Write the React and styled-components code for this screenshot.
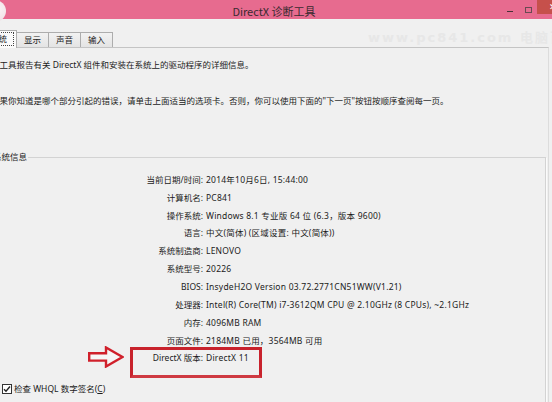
import React from "react";
import styled, { createGlobalStyle } from "styled-components";

const FONT = `"Noto Sans", "Noto Sans CJK SC", sans-serif`;
const FS = "8.5px";

const GlobalStyle = createGlobalStyle`
  html, body { margin: 0; padding: 0; }
  body {
    width: 552px;
    height: 402px;
    overflow: hidden;
    background: #f0f0f0;
    font-family: ${FONT};
    color: #1b1b1b;
  }
`;

const Window = styled.div`
  position: relative;
  width: 588px;
  height: 420px;
  margin-left: -20px;
  background: #f0f0f0;
  display: flex;
  flex-direction: column;
`;

const TitleBar = styled.div`
  flex: none;
  height: 19px;
  background: #e76b8f;
  display: grid;
  grid-template-columns: 1fr auto 1fr;
  align-items: center;
`;

const AppIcon = styled.div`
  width: 22px;
  height: 22px;
  border-radius: 50%;
  margin-left: 4px;
  align-self: start;
  background: radial-gradient(circle at 60% 40%, #fbf4f6, #ecd9df);
`;

const Title = styled.div`
  font-family: "Noto Sans CJK SC", sans-serif;
  font-size: 11px;
  line-height: 19px;
  color: #3a2a30;
  white-space: nowrap;
`;

const Controls = styled.div`
  justify-self: end;
  align-self: stretch;
  display: flex;
`;

const CtrlButton = styled.div`
  width: 18px;
  display: flex;
  align-items: center;
  justify-content: center;
`;

const MinGlyph = styled.span`
  width: 6px;
  height: 1px;
  background: #4a3038;
  margin-top: 1px;
`;

const MaxGlyph = styled.span`
  width: 7px;
  height: 6px;
  border: 1px solid #6a4a52;
  box-sizing: border-box;
  margin-top: -2px;
`;

const CloseButton = styled.div`
  width: 31px;
  height: 14px;
  background: #c6504b;
  color: #fff;
  font-size: 9px;
  line-height: 14px;
  text-align: center;
  align-self: start;
`;

const TabStrip = styled.div`
  flex: none;
  margin-top: 11px;
  height: 17px;
  display: flex;
  align-items: flex-end;
  padding-left: 1px;
  position: relative;
  z-index: 1;
`;

const Tab = styled.div`
  height: ${(p) => (p.$active ? 18 : 15)}px;
  box-sizing: border-box;
  padding: ${(p) => (p.$active ? "1px 2px 0" : "0 7px")};
  margin-left: -1px;
  margin-bottom: ${(p) => (p.$active ? -1 : 0)}px;
  border: 1px solid #adadad;
  border-bottom: none;
  background: ${(p) => (p.$active ? "#fbfbfb" : "linear-gradient(#f2f2f2, #e4e4e4)")};
  font-size: ${FS};
  line-height: 14px;
  white-space: nowrap;
  position: relative;
  z-index: ${(p) => (p.$active ? 2 : 1)};
`;

const FocusRing = styled.span`
  display: block;
  border: 1px dotted #444;
  padding: 0 6px;
  line-height: 12px;
`;

const Watermark = styled.div`
  position: absolute;
  left: 388px;
  top: 27px;
  font-family: "DejaVu Sans", "Noto Sans CJK SC", sans-serif;
  font-weight: bold;
  font-size: 13px;
  letter-spacing: 2px;
  color: #e7e7e7;
  white-space: nowrap;
`;

const Panel = styled.div`
  flex: 1;
  display: flex;
  flex-direction: column;
  margin-right: 19px;
  padding: 10px 2px 0 7px;
  border-top: 1px solid #c4c4c4;
  border-right: 1px solid #dcdcdc;
`;

const Para = styled.p`
  margin: ${(p) => (p.$gap ? "22px" : "0")} 0 0 0;
  padding-left: 4px;
  font-size: ${FS};
  line-height: 14px;
  white-space: nowrap;
`;

const Group = styled.fieldset`
  flex: 1;
  margin: 42px 0 0 0;
  padding: 0;
  min-width: 0;
  border: 1px solid #d3d3d3;
  box-shadow: 1px 1px 0 #fbfbfb;
`;

const Legend = styled.legend`
  margin-left: 4px;
  padding: 0 1px;
  font-size: ${FS};
  line-height: 14px;
`;

const InfoGrid = styled.div`
  position: relative;
  margin-top: 7px;
  display: grid;
  grid-template-columns: 215px 1fr;
  column-gap: 3px;
  grid-auto-rows: 17.85px;
  align-items: center;
  font-size: ${FS};
  line-height: 14px;
`;

const Label = styled.div`
  text-align: right;
  white-space: nowrap;
`;

const Value = styled.div`
  white-space: nowrap;
  letter-spacing: 0.22px;
`;

const RedBox = styled.div`
  position: absolute;
  left: 142px;
  top: 176px;
  width: 132px;
  height: 31px;
  box-sizing: border-box;
  border: 3px solid #c8222c;
  border-bottom-color: #cf3a42;
`;

const Arrow = styled.svg`
  position: absolute;
  left: 100px;
  top: 175px;
`;

const CheckRow = styled.label`
  display: flex;
  align-items: center;
  gap: 2px;
  margin: 15px 0 0 14px;
  height: 14px;
  font-size: ${FS};
  line-height: 14px;
  white-space: nowrap;
`;

const CheckBox = styled.span`
  width: 10px;
  height: 10px;
  box-sizing: border-box;
  border: 1px solid #333;
  background: #fff;
  display: flex;
  align-items: center;
  justify-content: center;
`;

const rows = [
  ["当前日期/时间:", "2014年10月6日, 15:44:00"],
  ["计算机名:", "PC841"],
  ["操作系统:", "Windows 8.1 专业版 64 位 (6.3，版本 9600)"],
  ["语言:", "中文(简体) (区域设置: 中文(简体))"],
  ["系统制造商:", "LENOVO"],
  ["系统型号:", "20226"],
  ["BIOS:", "InsydeH2O Version 03.72.2771CN51WW(V1.21)"],
  ["处理器:", "Intel(R) Core(TM) i7-3612QM CPU @ 2.10GHz (8 CPUs), ~2.1GHz"],
  ["内存:", "4096MB RAM"],
  ["页面文件:", "2184MB 已用，3564MB 可用"],
  ["DirectX 版本:", "DirectX 11"],
];

export default function App() {
  return (
    <>
      <GlobalStyle />
      <Window>
        <TitleBar>
          <AppIcon />
          <Title>DirectX 诊断工具</Title>
          <Controls>
            <CtrlButton><MinGlyph /></CtrlButton>
            <CtrlButton><MaxGlyph /></CtrlButton>
            <CloseButton>✕</CloseButton>
          </Controls>
        </TitleBar>
        <TabStrip>
          <Tab $active><FocusRing>系统</FocusRing></Tab>
          <Tab>显示</Tab>
          <Tab>声音</Tab>
          <Tab>输入</Tab>
        </TabStrip>
        <Watermark>www.pc841.com 电脑百事网</Watermark>
        <Panel>
          <Para>此工具报告有关 DirectX 组件和安装在系统上的驱动程序的详细信息。</Para>
          <Para $gap>如果你知道是哪个部分引起的错误，请单击上面适当的选项卡。否则，你可以使用下面的"下一页"按钮按顺序查阅每一页。</Para>
          <Group>
            <Legend>系统信息</Legend>
            <InfoGrid>
              {rows.map(([l, v]) => (
                <React.Fragment key={l}>
                  <Label>{l}</Label>
                  <Value>{v}</Value>
                </React.Fragment>
              ))}
              <RedBox />
              <Arrow width="36" height="22" viewBox="0 0 36 22">
                <polygon
                  points="1.2,7.2 18,7.2 18,1.5 34.5,11 18,20.5 18,14.6 1.2,14.6"
                  fill="#f6f6f6"
                  stroke="#d0202b"
                  strokeWidth="2.4"
                  strokeLinejoin="miter"
                />
              </Arrow>
            </InfoGrid>
            <CheckRow>
              <CheckBox>
                <svg width="8" height="8" viewBox="0 0 8 8">
                  <path d="M1 4.2 L3 6.2 L7 1.5" fill="none" stroke="#222" strokeWidth="1.4" />
                </svg>
              </CheckBox>
              <span>检查 WHQL 数字签名(<u>C</u>)</span>
            </CheckRow>
          </Group>
        </Panel>
      </Window>
    </>
  );
}
